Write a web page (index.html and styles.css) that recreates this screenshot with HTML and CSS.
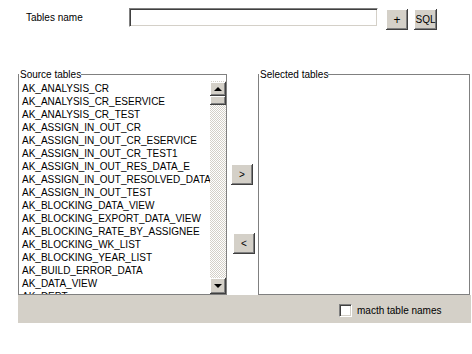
FILE: index.html
```html
<!DOCTYPE html>
<html lang="en">
<head>
  <meta charset="UTF-8">
  <title>Tables</title>
  <link rel="stylesheet" href="styles.css">
</head>
<body>

  <!-- Table name filter -->
  <div class="top-row">
    <label class="name-label">Tables name</label>
    <input class="name-input" type="text">
    <button class="btn btn-plus">+</button>
    <button class="btn btn-sql">SQL</button>
  </div>

  <div class="panel">
    <div class="lists">

      <!-- Source list -->
      <fieldset class="box source">
        <legend>Source tables</legend>
        <div class="list-wrap">
          <ul class="items">
            <li>AK_ANALYSIS_CR</li>
            <li>AK_ANALYSIS_CR_ESERVICE</li>
            <li>AK_ANALYSIS_CR_TEST</li>
            <li>AK_ASSIGN_IN_OUT_CR</li>
            <li>AK_ASSIGN_IN_OUT_CR_ESERVICE</li>
            <li>AK_ASSIGN_IN_OUT_CR_TEST1</li>
            <li>AK_ASSIGN_IN_OUT_RES_DATA_E</li>
            <li>AK_ASSIGN_IN_OUT_RESOLVED_DATA</li>
            <li>AK_ASSIGN_IN_OUT_TEST</li>
            <li>AK_BLOCKING_DATA_VIEW</li>
            <li>AK_BLOCKING_EXPORT_DATA_VIEW</li>
            <li>AK_BLOCKING_RATE_BY_ASSIGNEE</li>
            <li>AK_BLOCKING_WK_LIST</li>
            <li>AK_BLOCKING_YEAR_LIST</li>
            <li>AK_BUILD_ERROR_DATA</li>
            <li>AK_DATA_VIEW</li>
            <li>AK_DEPT</li>
          </ul>
          <div class="scrollbar">
            <div class="sb-btn up"><span class="arrow-up"></span></div>
            <div class="sb-thumb"></div>
            <div class="sb-track"></div>
            <div class="sb-btn down"><span class="arrow-down"></span></div>
          </div>
        </div>
      </fieldset>

      <!-- Move buttons -->
      <div class="move-col">
        <button class="btn btn-add">&gt;</button>
        <button class="btn btn-remove">&lt;</button>
      </div>

      <!-- Selected list -->
      <fieldset class="box selected">
        <legend>Selected tables</legend>
      </fieldset>
    </div>

    <div class="status-bar">
      <label class="match"><span class="check"></span>macth table names</label>
    </div>
  </div>

</body>
</html>
```

FILE: styles.css
```css
:root {
  --face: #d4d0c8;
  --shadow: #808080;
  --dark: #404040;
  --line: #808080;
}

body {
  margin: 0;
  background: #fff;
  color: #000;
  font-family: "Liberation Sans", Arial, sans-serif;
  font-size: 10px;
}

/* classic 3D button */
.btn {
  box-sizing: border-box;
  height: 21px;
  padding: 0;
  border: none;
  background: var(--face);
  font: inherit;
  color: #000;
  box-shadow: inset -1px -1px var(--dark), inset 1px 1px #fff,
    inset -2px -2px var(--shadow), inset 2px 2px var(--face);
}

.top-row {
  display: flex;
  align-items: flex-start;
  padding: 8px 0 0 26px;
}

.name-label {
  width: 103px;
  line-height: 19px;
}

.name-input {
  box-sizing: border-box;
  width: 249px;
  height: 19px;
  margin: 0;
  border: 1px solid;
  border-color: var(--shadow) #fff #fff var(--shadow);
  box-shadow: inset 1px 1px var(--dark), inset -1px -1px var(--face);
  background: #fff;
}

.btn-plus {
  width: 22px;
  margin: 1px 0 0 8px;
  font-size: 12px;
}

.btn-sql {
  width: 23px;
  margin: 1px 0 0 6px;
}

.panel {
  width: 453px;
  margin: 38px 0 0 18px;
}

.lists {
  display: flex;
  height: 227px;
}

.box {
  margin: 0;
  padding: 0;
  border: 1px solid var(--line);
  min-width: 0;
  box-sizing: border-box;
}

.box legend {
  padding: 0 0 0 1px;
  line-height: 13px;
}

.source {
  width: 209px;
  display: flex;
  flex-direction: column;
}

.selected {
  width: 212px;
}

.list-wrap {
  flex: 1;
  display: flex;
  overflow: hidden;
}

.items {
  flex: 1;
  margin: 0;
  padding: 1px 0 0 3px;
  list-style: none;
  overflow: hidden;
  white-space: nowrap;
}

.items li {
  line-height: 13px;
}

.scrollbar {
  width: 16px;
  display: flex;
  flex-direction: column;
  background: repeating-conic-gradient(var(--face) 0 25%, #fff 0 50%) 0 0 / 2px 2px;
}

.sb-btn,
.sb-thumb {
  background: var(--face);
  box-shadow: inset -1px -1px var(--dark), inset 1px 1px #fff,
    inset -2px -2px var(--shadow), inset 2px 2px var(--face);
  display: flex;
  align-items: center;
  justify-content: center;
}

.sb-btn.up {
  height: 14px;
  margin-top: 1px;
}

.sb-thumb {
  height: 9px;
}

.sb-track {
  flex: 1;
}

.sb-btn.down {
  height: 16px;
}

.arrow-up {
  border: 4px solid transparent;
  border-top: none;
  border-bottom: 4px solid #000;
}

.arrow-down {
  border: 4px solid transparent;
  border-bottom: none;
  border-top: 4px solid #000;
}

.move-col {
  width: 31px;
  display: flex;
  flex-direction: column;
  align-items: flex-start;
}

.btn-add {
  width: 22px;
  margin: 96px 0 0 4px;
}

.btn-remove {
  width: 22px;
  margin: 48px 0 0 6px;
}

.status-bar {
  height: 28px;
  background: var(--face);
  display: flex;
  align-items: flex-start;
  padding: 9px 0 0 321px;
  box-sizing: border-box;
}

.match {
  display: flex;
  align-items: center;
  line-height: 13px;
}

.check {
  width: 13px;
  height: 13px;
  box-sizing: border-box;
  margin-right: 5px;
  background: #fff;
  border: 1px solid;
  border-color: var(--shadow) #fff #fff var(--shadow);
  box-shadow: inset 1px 1px var(--dark), inset -1px -1px var(--face);
}
```
